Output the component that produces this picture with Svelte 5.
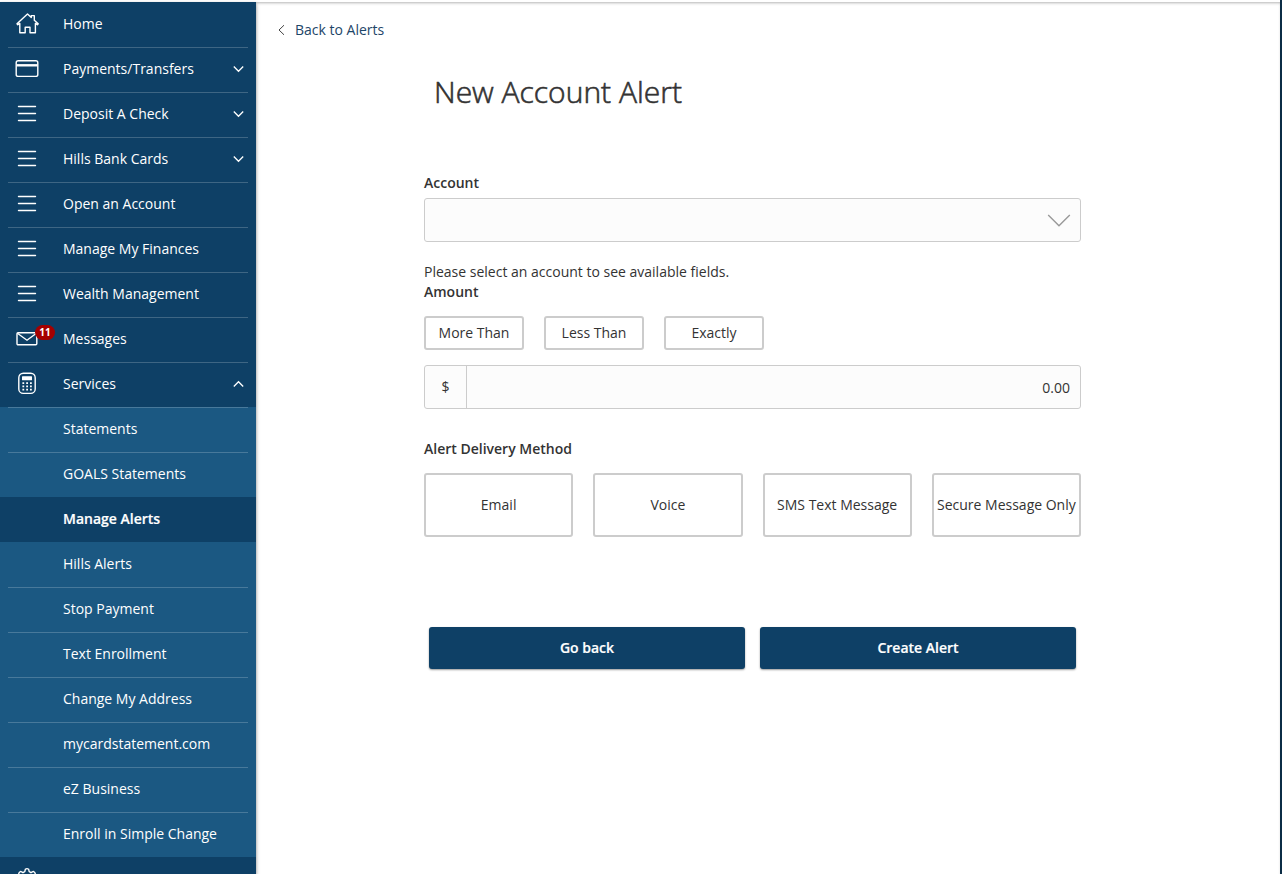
<script>
	const menu = [
		{ label: 'Home', icon: 'home' },
		{ label: 'Payments/Transfers', icon: 'card', expandable: true },
		{ label: 'Deposit A Check', icon: 'lines', expandable: true },
		{ label: 'Hills Bank Cards', icon: 'lines', expandable: true },
		{ label: 'Open an Account', icon: 'lines' },
		{ label: 'Manage My Finances', icon: 'lines' },
		{ label: 'Wealth Management', icon: 'lines' },
		{ label: 'Messages', icon: 'mail', badge: 11 },
		{
			label: 'Services',
			icon: 'calculator',
			expandable: true,
			children: [
				'Statements',
				'GOALS Statements',
				'Manage Alerts',
				'Hills Alerts',
				'Stop Payment',
				'Text Enrollment',
				'Change My Address',
				'mycardstatement.com',
				'eZ Business',
				'Enroll in Simple Change',
			],
		},
		{ label: '', icon: 'gear' },
	];

	const comparisons = ['More Than', 'Less Than', 'Exactly'];
	const methods = ['Email', 'Voice', 'SMS Text Message', 'Secure Message Only'];

	let openMenu = $state('Services');
	let activePage = $state('Manage Alerts');
	let comparison = $state(null);
	let method = $state(null);
	let amount = $state('0.00');

	function toggle(item) {
		if (item.expandable) openMenu = openMenu === item.label ? null : item.label;
	}
</script>

{#snippet icon(name)}
	<svg class="icon" width="26" height="26" viewBox="0 0 26 26" fill="none" stroke="#fff" stroke-width="1.4">
		{#if name === 'home'}
			<path d="M3 12.8 L13.5 3 L17.3 6.4 V4.6 H20.3 V9.2 L24.2 12.8 L23.4 13.8 L21.4 12.4 V21.8 H16 V16.2 H11.2 V21.8 H5.8 V12.4 L3.8 13.8 Z" stroke-linejoin="round" />
		{:else if name === 'card'}
			<rect x="2.2" y="4.8" width="21.6" height="15.6" rx="2" />
			<path d="M2.4 9.3 H23.6" stroke-width="2.4" />
		{:else if name === 'lines'}
			<path d="M4.5 5.5 H21.5 M4.5 12.5 H21.5 M4.5 19.5 H21.5" stroke-linecap="round" />
		{:else if name === 'mail'}
			<rect x="3" y="6.7" width="19.8" height="12" rx="1" />
			<path d="M3.4 7.2 L13 14.2 L22.4 7.2" />
		{:else if name === 'calculator'}
			<rect x="4.8" y="2.2" width="16.4" height="20.2" rx="4.5" />
			<rect x="8" y="5.2" width="10" height="4" rx="0.5" fill="#fff" stroke="none" />
			<path d="M8.4 12.2 H18 M8.4 15.4 H18 M8.4 18.6 H18" stroke-width="1.7" stroke-dasharray="1.8 2" />
		{:else if name === 'gear'}
			<path d="M11.4 3.2 Q13 2 14.6 3.2 L15.2 5.6 L17 6.6 L19.2 5.4 Q21.2 6.2 21.4 8.2 L20.2 10.8 L21 12.6 L23.2 13.4 V16 L21 17 L20.2 18.8 L21 21 L19 23 L16.8 22 L15 22.8 L14.2 25 H11.8 L11 22.8 L9.2 22 L7 23 L5 21 L5.8 18.8 L5 17 L2.8 16 V13.4 L5 12.6 L5.8 10.8 L4.6 8.2 Q4.8 6.2 6.8 5.4 L9 6.6 L10.8 5.6 Z" />
			<circle cx="13" cy="14.5" r="3.5" />
		{/if}
	</svg>
{/snippet}

<div class="app">
	<nav class="sidebar">
		{#each menu as item}
			<button class="item" onclick={() => toggle(item)}>
				<span class="icon-slot">
					{@render icon(item.icon)}
					{#if item.badge}
						<span class="badge">{item.badge}</span>
					{/if}
				</span>
				<span class="label">{item.label}</span>
				{#if item.expandable}
					<svg class={['caret', openMenu === item.label && 'up']} width="12" height="8" viewBox="0 0 12 8" fill="none" stroke="#fff" stroke-width="1.3">
						<path d="M0.8 1.5 L5.5 6.3 L10.2 1.5" />
					</svg>
				{/if}
			</button>
			{#if item.children && openMenu === item.label}
				<div class="submenu">
					{#each item.children as child}
						<button class={['item', 'child', activePage === child && 'active']} onclick={() => (activePage = child)}>
							<span class="label">{child}</span>
						</button>
					{/each}
				</div>
			{/if}
		{/each}
	</nav>

	<main>
		<a class="back" href="#alerts">
			<svg width="8" height="12" viewBox="0 0 8 12" fill="none" stroke="#444" stroke-width="1">
				<path d="M6 1.2 L1 6 L6 10.8" />
			</svg>
			Back to Alerts
		</a>

		<h1>New Account Alert</h1>

		<form onsubmit={(e) => e.preventDefault()}>
			<div class="title">Account</div>
			<button type="button" class="select" aria-label="Account">
				<svg width="24" height="14" viewBox="0 0 24 14" fill="none" stroke="#999" stroke-width="1.4">
					<path d="M1.2 2 L12 12.7 L22.8 2" />
				</svg>
			</button>

			<p class="hint">Please select an account to see available fields.</p>
			<div class="title">Amount</div>
			<div class="comparisons">
				{#each comparisons as c}
					<button type="button" class={['choice', comparison === c && 'selected']} onclick={() => (comparison = c)}>{c}</button>
				{/each}
			</div>
			<div class="amount">
				<span class="currency">$</span>
				<input aria-label="Amount" bind:value={amount} />
			</div>

			<div class="title">Alert Delivery Method</div>
			<div class="methods">
				{#each methods as m}
					<button type="button" class={['choice', method === m && 'selected']} onclick={() => (method = m)}>{m}</button>
				{/each}
			</div>

			<div class="actions">
				<button type="button">Go back</button>
				<button type="submit">Create Alert</button>
			</div>
		</form>
	</main>
</div>

<style>
	:global(body) {
		background: #fff;
		overflow: hidden;
	}

	.app {
		display: flex;
		box-sizing: border-box;
		height: 874px;
		padding-top: 2px;
		border-right: 2px solid #0b2c45;
		overflow: hidden;
		color: #333;
		font: 14px/20px 'Open Sans', sans-serif;
	}

	button,
	input {
		box-sizing: border-box;
		margin: 0;
		padding: 0;
		border: 0;
		background: none;
		color: inherit;
		font: inherit;
		letter-spacing: inherit;
	}

	button {
		cursor: pointer;
	}

	.sidebar {
		flex: none;
		width: 256px;
		background: #0e4066;
		box-shadow: 0 2px 4px rgba(0, 0, 0, 0.4);
		z-index: 1;
	}

	.item {
		position: relative;
		display: flex;
		align-items: center;
		width: 100%;
		height: 45px;
		padding: 0 11px 0 14px;
		color: #fff;
		font-weight: 500;
		text-align: left;
	}

	.item::before {
		content: '';
		position: absolute;
		top: 0;
		left: 8px;
		right: 8px;
		height: 1px;
		background: rgba(255, 255, 255, 0.2);
	}

	.sidebar > .item:first-child::before,
	.submenu + .item::before,
	.active::before,
	.active + .item::before {
		display: none;
	}

	.icon-slot {
		position: relative;
		width: 49px;
		height: 26px;
		margin-bottom: 2px;
	}

	.icon {
		display: block;
	}

	.badge {
		position: absolute;
		top: -1px;
		left: 21px;
		width: 20px;
		height: 15px;
		border-radius: 8px;
		background: #a50000;
		font-size: 10px;
		font-weight: 700;
		line-height: 15px;
		text-align: center;
	}

	.label {
		flex: 1;
		padding-bottom: 1px;
	}

	.caret {
		margin-bottom: 1px;
	}

	.caret.up {
		transform: scaleY(-1);
	}

	.submenu {
		background: #1b5882;
	}

	.child {
		padding-left: 63px;
	}

	.active {
		background: #0e4066;
		font-weight: 600;
	}

	.active .label {
		-webkit-text-stroke: 0.2px #fff;
	}

	main {
		flex: 1;
		padding: 18px 0 0 22px;
		box-shadow: inset 0 2px 3px -1px rgba(0, 0, 0, 0.3);
	}

	.back {
		display: flex;
		align-items: center;
		gap: 9px;
		width: max-content;
		color: #1d4668;
		text-decoration: none;
	}

	h1 {
		margin: 32px 0 0 156px;
		font-size: 30px;
		font-weight: 300;
		line-height: 40px;
		-webkit-text-stroke: 0.6px #333;
	}

	form {
		width: 657px;
		margin: 61px 0 0 146px;
	}

	.title {
		font-weight: 600;
	}

	.select {
		display: flex;
		align-items: center;
		justify-content: flex-end;
		width: 100%;
		height: 44px;
		margin-top: 5px;
		padding-right: 9px;
		border: 1px solid #ccc;
		border-radius: 3px;
		background: #fcfcfc;
	}

	.hint {
		margin: 20px 0 0;
	}

	.comparisons {
		display: flex;
		gap: 20px;
		margin-top: 14px;
	}

	.choice {
		border: 2px solid #ccc;
		border-radius: 3px;
		white-space: nowrap;
	}

	.selected {
		border-color: #0e4066;
	}

	.comparisons .choice {
		width: 100px;
		height: 34px;
	}

	.amount {
		display: flex;
		box-sizing: border-box;
		height: 44px;
		margin: 15px 0 30px;
		border: 1px solid #ccc;
		border-radius: 3px;
		background: #fcfcfc;
	}

	.currency {
		width: 41px;
		border-right: 1px solid #ccc;
		line-height: 42px;
		text-align: center;
	}

	.amount input {
		flex: 1;
		padding: 2px 10px 0;
		outline: none;
		text-align: right;
	}

	.methods {
		display: grid;
		grid-template-columns: repeat(4, minmax(0, 1fr));
		gap: 20px;
		margin-top: 14px;
	}

	.methods .choice {
		height: 64px;
	}

	.actions {
		display: grid;
		grid-template-columns: 1fr 1fr;
		gap: 15px;
		margin: 90px 5px 0;
	}

	.actions button {
		height: 42px;
		border-radius: 3px;
		background: #0e4066;
		box-shadow: 0 1px 2px rgba(0, 0, 0, 0.4);
		color: #fff;
		font-weight: 600;
		-webkit-text-stroke: 0.2px #fff;
	}
</style>
